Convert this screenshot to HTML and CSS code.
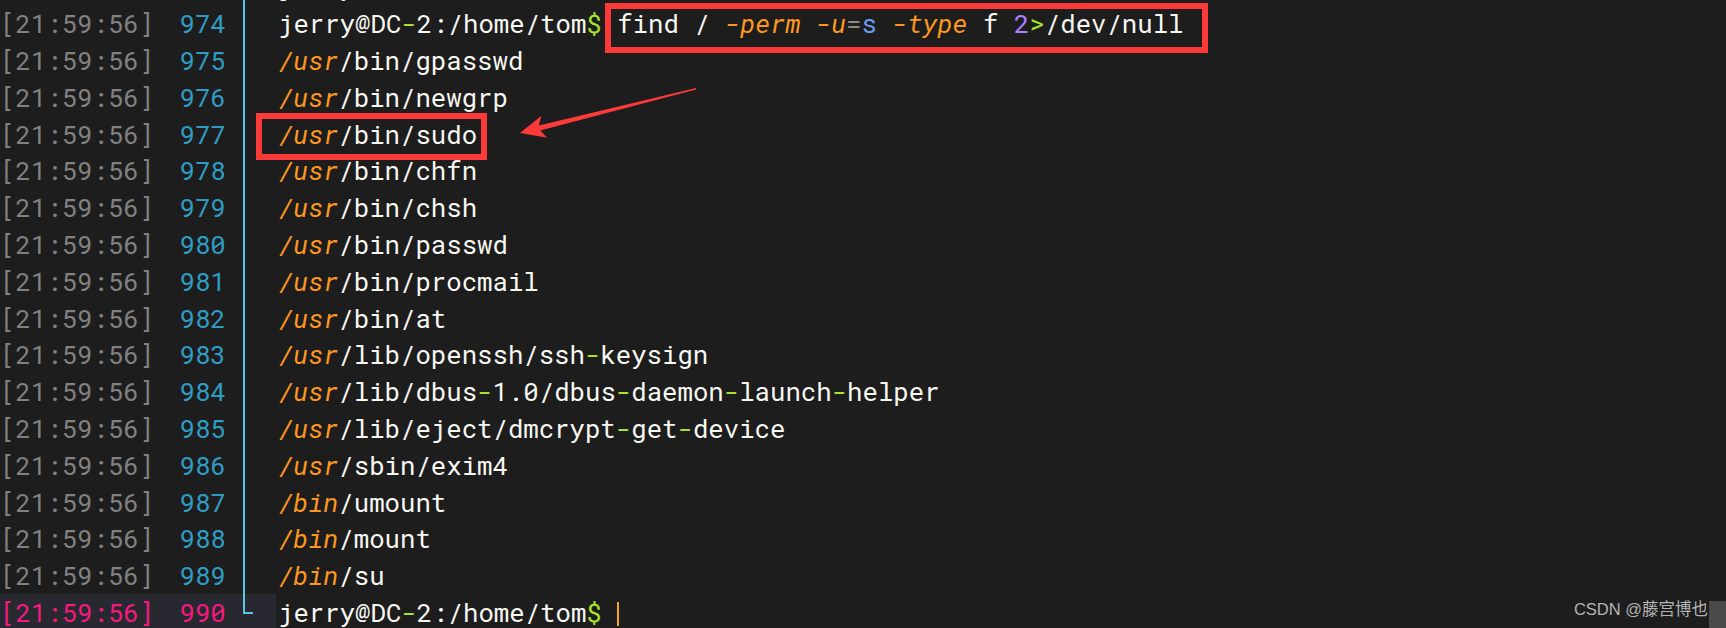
FILE: index.html
```html
<!DOCTYPE html>
<html>
<head>
<meta charset="utf-8">
<link rel="stylesheet" href="styles.css">
</head>
<body>
<div class="term">
  <div class="row"><div class="gutter"><span class="ts">[21:59:56]</span><span class="ln">973</span><span class="fold"><i class="guide"></i></span></div><span class="code">jerry<span class="w">@</span>DC<span class="g">-</span>2:/home/tom<span class="g">$</span> id</span></div>
  <div class="row"><div class="gutter"><span class="ts">[21:59:56]</span><span class="ln">974</span><span class="fold"><i class="guide"></i></span></div><span class="code">jerry@DC<span class="g">-</span>2:/home/tom<span class="g">$</span> find / <span class="o">-perm</span> <span class="o">-u</span><span class="gr">=</span><span class="b">s</span> <span class="o">-type</span> f <span class="p">2</span><span class="g">&gt;</span>/dev/null</span></div>
  <div class="row"><div class="gutter"><span class="ts">[21:59:56]</span><span class="ln">975</span><span class="fold"><i class="guide"></i></span></div><span class="code"><span class="o">/usr</span>/bin/gpasswd</span></div>
  <div class="row"><div class="gutter"><span class="ts">[21:59:56]</span><span class="ln">976</span><span class="fold"><i class="guide"></i></span></div><span class="code"><span class="o">/usr</span>/bin/newgrp</span></div>
  <div class="row"><div class="gutter"><span class="ts">[21:59:56]</span><span class="ln">977</span><span class="fold"><i class="guide"></i></span></div><span class="code"><span class="o">/usr</span>/bin/sudo</span></div>
  <div class="row"><div class="gutter"><span class="ts">[21:59:56]</span><span class="ln">978</span><span class="fold"><i class="guide"></i></span></div><span class="code"><span class="o">/usr</span>/bin/chfn</span></div>
  <div class="row"><div class="gutter"><span class="ts">[21:59:56]</span><span class="ln">979</span><span class="fold"><i class="guide"></i></span></div><span class="code"><span class="o">/usr</span>/bin/chsh</span></div>
  <div class="row"><div class="gutter"><span class="ts">[21:59:56]</span><span class="ln">980</span><span class="fold"><i class="guide"></i></span></div><span class="code"><span class="o">/usr</span>/bin/passwd</span></div>
  <div class="row"><div class="gutter"><span class="ts">[21:59:56]</span><span class="ln">981</span><span class="fold"><i class="guide"></i></span></div><span class="code"><span class="o">/usr</span>/bin/procmail</span></div>
  <div class="row"><div class="gutter"><span class="ts">[21:59:56]</span><span class="ln">982</span><span class="fold"><i class="guide"></i></span></div><span class="code"><span class="o">/usr</span>/bin/at</span></div>
  <div class="row"><div class="gutter"><span class="ts">[21:59:56]</span><span class="ln">983</span><span class="fold"><i class="guide"></i></span></div><span class="code"><span class="o">/usr</span>/lib/openssh/ssh<span class="g">-</span>keysign</span></div>
  <div class="row"><div class="gutter"><span class="ts">[21:59:56]</span><span class="ln">984</span><span class="fold"><i class="guide"></i></span></div><span class="code"><span class="o">/usr</span>/lib/dbus<span class="g">-</span>1.0/dbus<span class="g">-</span>daemon<span class="g">-</span>launch<span class="g">-</span>helper</span></div>
  <div class="row"><div class="gutter"><span class="ts">[21:59:56]</span><span class="ln">985</span><span class="fold"><i class="guide"></i></span></div><span class="code"><span class="o">/usr</span>/lib/eject/dmcrypt<span class="g">-</span>get<span class="g">-</span>device</span></div>
  <div class="row"><div class="gutter"><span class="ts">[21:59:56]</span><span class="ln">986</span><span class="fold"><i class="guide"></i></span></div><span class="code"><span class="o">/usr</span>/sbin/exim4</span></div>
  <div class="row"><div class="gutter"><span class="ts">[21:59:56]</span><span class="ln">987</span><span class="fold"><i class="guide"></i></span></div><span class="code"><span class="o">/bin</span>/umount</span></div>
  <div class="row"><div class="gutter"><span class="ts">[21:59:56]</span><span class="ln">988</span><span class="fold"><i class="guide"></i></span></div><span class="code"><span class="o">/bin</span>/mount</span></div>
  <div class="row"><div class="gutter"><span class="ts">[21:59:56]</span><span class="ln">989</span><span class="fold"><i class="guide"></i></span></div><span class="code"><span class="o">/bin</span>/su</span></div>
  <div class="row current"><div class="gutter"><span class="ts">[21:59:56]</span><span class="ln">990</span><span class="fold"><i class="guide end"></i></span></div><span class="code">jerry@DC<span class="g">-</span>2:/home/tom<span class="g">$</span> <i class="cursor"></i></span></div>
</div>

<div class="mark mark-cmd"></div>
<div class="mark mark-sudo"></div>
<svg class="arrow" width="1726" height="628" viewBox="0 0 1726 628">
  <polygon points="696,88 538.8,125.4 541.4,115.8 520,133 547.2,137.8 540.2,130.6 696,89.6" fill="#fd3a3a"/>
</svg>

<div class="watermark">CSDN @藤宫博也</div>
<div class="scroll-corner"></div>
</body>
</html>
```

FILE: styles.css
```css
html, body {
  margin: 0;
  padding: 0;
  width: 1726px;
  height: 628px;
  overflow: hidden;
  background: #1d1d1d;
}

body {
  position: relative;
  font-family: "Roboto Mono", "DejaVu Sans Mono", "Liberation Mono", monospace;
  font-size: 25.7px;
  color: #f8f8f2;
}

.term {
  margin-top: -31.6px;
  display: flex;
  flex-direction: column;
}

.row {
  display: flex;
  align-items: stretch;
  height: 36.8px;
  line-height: 36.8px;
  white-space: pre;
}

.gutter {
  display: flex;
  width: 276px;
  flex: 0 0 276px;
}

.ts {
  width: 179.5px;
  color: #818181;
}

.ln {
  width: 46.4px;
  color: #2f9cc3;
}

.current .gutter {
  background: #282830;
}

.current .ts,
.current .ln {
  color: #f5197e;
}

.fold {
  flex: 1;
  display: flex;
}

.guide {
  display: block;
  margin-left: 17px;
  width: 8px;
  border-left: 2px solid #5cc6e6;
}

.guide.end {
  height: 50%;
  border-bottom: 2px solid #5cc6e6;
}

.code {
  padding-left: 2px;
}

.o { color: #fd971f; font-style: italic; }
.g { color: #a6e22e; }
.p { color: #ae81ff; }
.b { color: #6a9bf0; }
.gr { color: #8a8a84; }
.w { color: #f8f8f2; }

.cursor {
  display: inline-block;
  width: 2px;
  height: 24px;
  vertical-align: -4px;
  background: #f5a623;
}

.mark {
  position: absolute;
  box-sizing: border-box;
  border: 6.5px solid #fd3a3a;
}

.mark-cmd {
  left: 605px;
  top: 3px;
  width: 603px;
  height: 50px;
}

.mark-sudo {
  left: 256px;
  top: 113px;
  width: 231px;
  height: 47px;
}

.arrow {
  position: absolute;
  left: 0;
  top: 0;
}

.watermark {
  position: absolute;
  right: 18px;
  top: 597px;
  font-family: "Liberation Sans", "Noto Sans CJK SC", sans-serif;
  font-size: 16.5px;
  line-height: 24px;
  color: #b4b4b4;
}

.scroll-corner {
  position: absolute;
  left: 1709px;
  top: 601px;
  width: 17px;
  height: 27px;
  background: #4a4a4a;
}
```
